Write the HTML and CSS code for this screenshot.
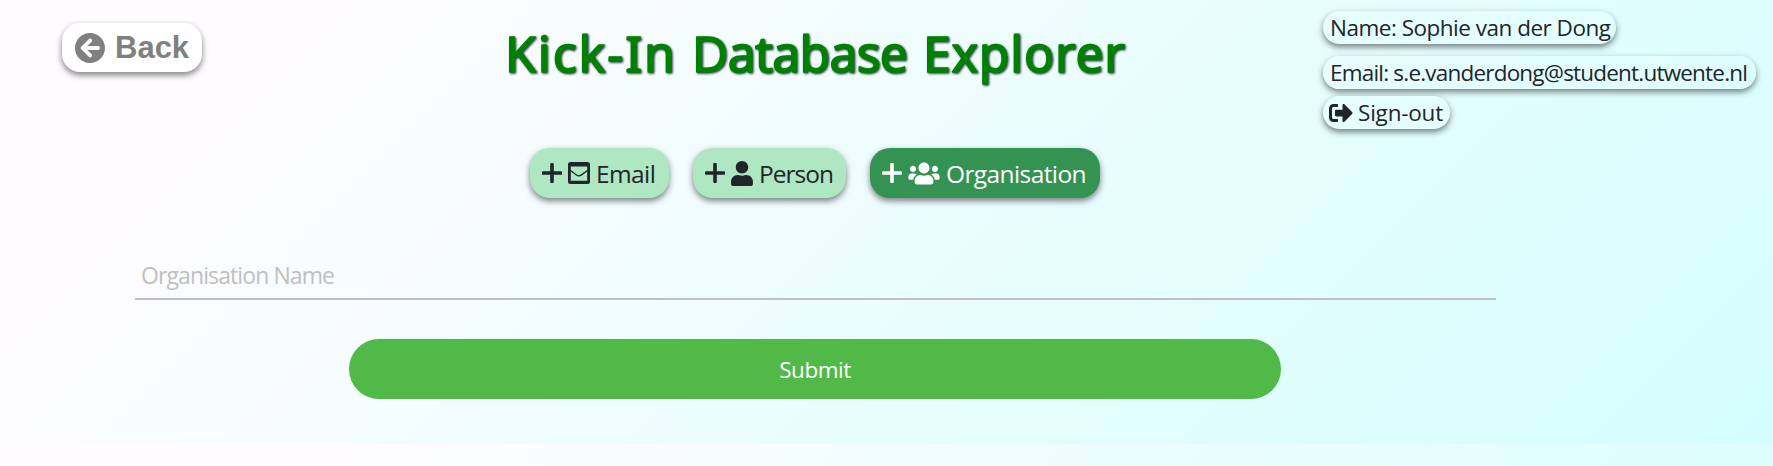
FILE: index.html
```html
<!DOCTYPE html>
<html lang="en">
<head>
<meta charset="utf-8">
<title>Kick-In Database Explorer</title>
<link rel="stylesheet" href="styles.css">
</head>
<body>
<div class="page">
<header class="header">
  <div class="side">
    <a class="back"><svg class="icon" width="30" height="30" viewBox="8 8 496 496"><path d="M256 504C119 504 8 393 8 256S119 8 256 8s248 111 248 248-111 248-248 248zm28.900-143.600L209.400 288H392c13.300 0 24-10.700 24-24v-16c0-13.300-10.700-24-24-24H209.400l75.500-72.400c9.700-9.300 9.900-24.800.4-34.300l-11-10.900c-9.400-9.400-24.600-9.400-33.900 0L107.700 239c-9.400 9.400-9.400 24.600 0 33.900l132.700 132.700c9.400 9.400 24.600 9.400 33.900 0l11-10.900c9.500-9.500 9.300-25-.4-34.300z"/></svg><span>Back</span></a>
  </div>
  <div class="center">
    <h1 class="title"><svg width="640" height="90" viewBox="0 0 640 90"><text x="9" y="56" textLength="170">Kick-In</text><text x="196" y="56" textLength="216">Database</text><text x="427" y="56" textLength="202">Explorer</text></svg></h1>
    <nav class="tabs">
      <a class="tab email"><svg class="icon plus" width="20" height="20" viewBox="0 0 20 20"><path d="M10 1.500v17M1.500 10h17"/></svg><svg class="icon" width="22" height="22" viewBox="0 0 22 22"><path fill-rule="evenodd" d="M2.500 0h17Q22 0 22 2.500v17q0 2.500-2.500 2.500h-17Q0 22 0 19.500v-17Q0 0 2.500 0zM2.800 4.500v14.200h16.400V4.500z"/><path class="thin" d="M2.500 8.500l6 4.400q2.500 1.800 5 0l6-4.400"/></svg><span>Email</span></a>
      <a class="tab person"><svg class="icon plus" width="20" height="20" viewBox="0 0 20 20"><path d="M10 1.500v17M1.500 10h17"/></svg><svg class="icon" width="22" height="25" viewBox="0 0 448 512"><path d="M224 256c70.700 0 128-57.300 128-128S294.700 0 224 0 96 57.300 96 128s57.300 128 128 128zm89.600 32h-16.700c-22.200 10.200-46.900 16-72.900 16s-50.600-5.800-72.900-16h-16.700C60.200 288 0 348.200 0 422.400V464c0 26.500 21.500 48 48 48h352c26.500 0 48-21.500 48-48v-41.600c0-74.200-60.200-134.400-134.400-134.400z"/></svg><span>Person</span></a>
      <a class="tab org active"><svg class="icon plus" width="20" height="20" viewBox="0 0 20 20"><path d="M10 1.500v17M1.500 10h17"/></svg><svg class="icon" width="32" height="25" viewBox="0 0 640 512"><path d="M96 224c35.300 0 64-28.700 64-64s-28.700-64-64-64-64 28.700-64 64 28.700 64 64 64zm448 0c35.300 0 64-28.700 64-64s-28.700-64-64-64-64 28.700-64 64 28.700 64 64 64zm32 32h-64c-17.600 0-33.500 7.100-45.100 18.600 40.300 22.100 68.900 62 75.100 109.400h66c17.700 0 32-14.300 32-32v-32c0-35.300-28.700-64-64-64zm-256 0c61.900 0 112-50.100 112-112S381.900 32 320 32 208 82.100 208 144s50.100 112 112 112zm76.800 32h-8.300c-20.800 10-43.900 16-68.500 16s-47.600-6-68.500-16h-8.300C179.600 288 128 339.600 128 403.200V432c0 26.500 21.500 48 48 48h288c26.500 0 48-21.500 48-48v-28.800c0-63.600-51.600-115.200-115.200-115.200zm-223.700-13.400C161.500 263.100 145.600 256 128 256H64c-35.300 0-64 28.700-64 64v32c0 17.700 14.300 32 32 32h65.900c6.300-47.400 34.900-87.300 75.200-109.400z"/></svg><span>Organisation</span></a>
    </nav>
  </div>
  <div class="user">
    <span class="pill name"><span>Name: Sophie van der Dong</span></span>
    <span class="pill mail"><span>Email: s.e.vanderdong@student.utwente.nl</span></span>
    <a class="pill out"><svg class="icon" width="24" height="24" viewBox="0 0 512 512"><path d="M497 273L329 441c-15 15-41 4.500-41-17v-96H152c-13.300 0-24-10.700-24-24v-96c0-13.300 10.700-24 24-24h136V88c0-21.400 25.900-32 41-17l168 168c9.300 9.400 9.300 24.600 0 34zM192 436v-40c0-6.600-5.400-12-12-12H96c-17.700 0-32-14.300-32-32V160c0-17.700 14.300-32 32-32h84c6.600 0 12-5.400 12-12V76c0-6.600-5.400-12-12-12H96c-53 0-96 43-96 96v192c0 53 43 96 96 96h84c6.600 0 12-5.400 12-12z"/></svg><span>Sign-out</span></a>
  </div>
</header>
<form class="form">
  <input class="field" type="text" placeholder="Organisation Name">
  <button class="submit" type="button">Submit</button>
</form>
</div>
</body>
</html>
```
FILE: styles.css
```css
* { box-sizing: border-box; }
html { background: linear-gradient(135deg, #fffcff 0%, #fffcff 14%, #d3fefd 100%) 0 0 / 100% 444px repeat-y; }
body { margin: 0; overflow: hidden; color: #212529; font: 22.500px "Segoe UI", "Open Sans", "Noto Sans", sans-serif; }
.header { display: flex; height: 240px; }
.side { width: 496px; padding: 23px 0 0 62px; }
.icon { flex: none; fill: currentColor; }
.back { display: inline-flex; align-items: center; gap: 10px; width: 140px; height: 49px; padding-left: 13px; border-radius: 18px; background: #fff; color: #808080; font: bold 31px "Liberation Sans", Arial, sans-serif; box-shadow: 0 3px 6px rgba(0,0,0,.5); }
.center { width: 827px; }
.title { margin: 16px 0 0; height: 76px; }
.title svg { display: block; overflow: visible; }
.title text { font: 400 50px "Comic Sans MS", "Noto Sans", sans-serif; fill: green; stroke: green; stroke-width: 1.600px; stroke-linejoin: round; filter: drop-shadow(1px 1px 1px #234); }
.tabs { display: flex; margin: 56px 0 0 34px; }
.tab { display: flex; align-items: center; height: 50px; padding-left: 12px; margin-right: 24px; border-radius: 20px; background: #aee7c1; box-shadow: 0 3px 6px rgba(0,0,0,.5); gap: 6px; white-space: nowrap; font-size: 24.500px; letter-spacing: -.6px; }
.email { width: 139px; }
.person { width: 153px; letter-spacing: -1px; }
.org { width: 230px; }
.active { background: #349252; color: #fff; }
.plus { stroke: currentColor; stroke-width: 3.600px; stroke-linecap: round; }
.thin { fill: none; stroke: currentColor; stroke-width: 1.300px; }
.user { display: flex; flex-direction: column; align-items: flex-start; padding-top: 11px; }
.pill { display: flex; align-items: center; height: 33px; padding-left: 7px; border-radius: 17px; box-shadow: 0 3px 6px rgba(0,0,0,.5); background: #e5feff; white-space: nowrap; letter-spacing: -.6px; }
.name { width: 293px; margin-bottom: 12px; letter-spacing: -.5px; }
.mail { width: 433px; margin-bottom: 7px; letter-spacing: -.8px; background: linear-gradient(90deg, #e8fdff, #dffdfe); }
.out { width: 127px; gap: 5px; padding-left: 6px; letter-spacing: -.2px; }
.form { display: flex; flex-direction: column; width: 1361px; margin-left: 135px; }
.field { height: 60px; padding: 11px 6px 0; border: 0; border-bottom: 2px solid #c0c0c0; outline: 0; background: transparent; font: inherit; font-size: 23px; letter-spacing: -.9px; }
.field::placeholder { color: #c0c0c0; opacity: 1; }
.submit { width: 932px; height: 60px; margin: 39px 0 0 214px; border: 0; border-radius: 30px; background: #51b948; color: #fff; font: inherit; letter-spacing: -.5px; }
```
